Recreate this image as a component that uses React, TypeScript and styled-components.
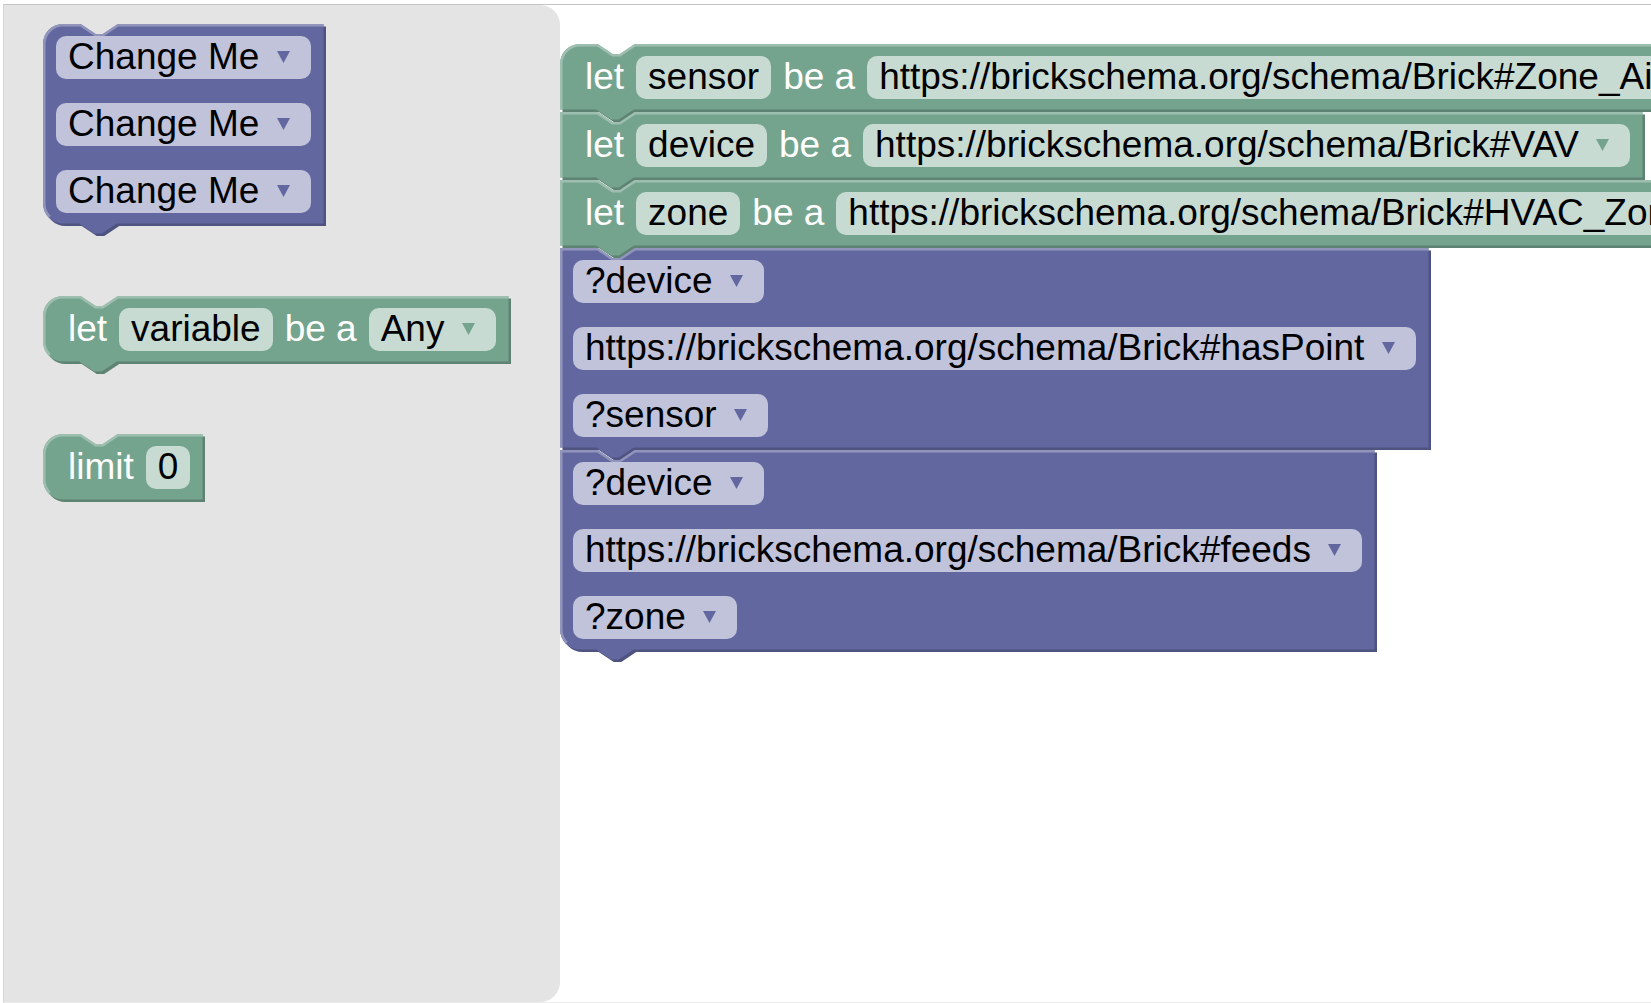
import { useLayoutEffect, useRef, useState } from "react";
import type { ReactNode } from "react";
import styled, { createGlobalStyle } from "styled-components";

/* ---------- palette ---------- */

type Tone = "green" | "purple";

const tones = {
  green: { fill: "#75a48e", light: "#9ebfb0", dark: "#5e8372", field: "#c8dbd2" },
  purple: { fill: "#62689f", light: "#9195bc", dark: "#4e537f", field: "#c0c3d9" },
};

/* ---------- layout ---------- */

const GlobalStyle = createGlobalStyle`
  *, *::before, *::after { box-sizing: border-box; }
  html, body, #root { height: 100%; }
  body {
    margin: 0;
    background: #fff;
    overflow: hidden;
    font-family: "Liberation Sans", Arial, sans-serif;
    font-size: 37px;
  }
`;

const Page = styled.div`
  height: 100%;
  padding: 4px 0 0 3px;
`;

const Editor = styled.div`
  display: flex;
  height: 100%;
  border: 1px solid #ececec;
  border-top-color: #c4c4c4;
  border-left-color: #d6d6d6;
  border-right: 0;
  overflow: hidden;
`;

const Flyout = styled.aside`
  display: flex;
  flex: none;
  flex-direction: column;
  align-items: flex-start;
  gap: 70px;
  width: 556px;
  padding: 19px 39px;
  background: #e4e4e4;
  border-radius: 0 20px 20px 0;
`;

const Workspace = styled.main`
  display: flex;
  flex: 1;
  flex-direction: column;
  align-items: flex-start;
  min-width: 0;
  padding-top: 39px;
  overflow: hidden;
`;

/* ---------- block ---------- */

const BlockBox = styled.div<{ $tone: Tone }>`
  position: relative;
  display: flex;
  flex: none;
  flex-direction: column;
  align-items: flex-start;
  gap: 24px;
  padding: 12px 15px 13px 13px;
  color: ${(p) => tones[p.$tone].fill};
`;

const Outline = styled.svg`
  position: absolute;
  inset: 0;
  width: 100%;
  height: 100%;
  overflow: visible;
  pointer-events: none;
`;

const Row = styled.div<{ $indent?: boolean }>`
  position: relative;
  display: flex;
  gap: 12px;
  padding-left: ${(p) => (p.$indent ? "12px" : "0")};
`;

const Label = styled.span`
  height: 43px;
  line-height: 41px;
  white-space: pre;
  color: #fff;
`;

const TextField = styled.input<{ $tone: Tone }>`
  field-sizing: content;
  height: 43px;
  padding: 0 12px 2px;
  border: 0;
  border-radius: 10px;
  background: ${(p) => tones[p.$tone].field};
  color: #000;
  font: inherit;
  line-height: 41px;
`;

const Picker = styled.span`
  display: inline-grid;
  align-items: start;
`;

const PickerSelect = styled.select<{ $tone: Tone }>`
  grid-area: 1 / 1;
  appearance: none;
  height: 43px;
  margin: 0;
  padding: 0 51px 2px 12px;
  border: 0;
  border-radius: 10px;
  background: ${(p) => tones[p.$tone].field};
  color: #000;
  font: inherit;
  line-height: 41px;
`;

const PickerArrow = styled.svg`
  grid-area: 1 / 1;
  justify-self: end;
  width: 13px;
  height: 12px;
  margin: 15px 21px 0 0;
  fill: currentColor;
  pointer-events: none;
`;

/* The outline is drawn in block units; one unit is 2.5 screen pixels. */
const SCALE = 2.5;

type Shape = {
  tone: Tone;
  squareTop?: boolean;
  squareBottom?: boolean;
  last?: boolean;
};

function BlockOutline({ w, h, tone, squareTop, squareBottom, last }: Shape & { w: number; h: number }) {
  const right = w / SCALE - 1;
  const bottom = h / SCALE - 1;
  const body = [
    squareTop ? "M 0,0" : "M 0,8 A 8,8 0 0,1 8,0",
    "H 15 l 6,4 3,0 6,-4",
    `H ${right} V ${bottom}`,
    last ? "" : "H 29.5 l -6,4 -3,0 -6,-4",
    squareBottom ? "H 0" : "H 8 a 8,8 0 0,1 -8,-8",
    "Z",
  ].join(" ");
  const highlight = [
    squareBottom ? `M 0.5,${bottom}` : `M 2.7,${bottom - 2.7} A 7.5,7.5 0 0,1 0.5,${bottom - 8}`,
    squareTop ? "V 0.5" : "V 8 A 7.5,7.5 0 0,1 8,0.5",
    `H 15 l 6,4 3,0 6,-4 H ${right}`,
  ].join(" ");
  const c = tones[tone];
  return (
    <Outline aria-hidden="true">
      <g transform={`scale(${SCALE})`}>
        <path d={body} fill={c.dark} transform="translate(1,1)" />
        <path d={body} fill={c.fill} />
        <path d={highlight} fill="none" stroke={c.light} strokeWidth="1" />
      </g>
    </Outline>
  );
}

function Block({ children, ...shape }: Shape & { children: ReactNode }) {
  const ref = useRef<HTMLDivElement>(null);
  const [size, setSize] = useState({ w: 0, h: 0 });

  useLayoutEffect(() => {
    const el = ref.current;
    if (!el) return;
    const measure = () => setSize({ w: el.offsetWidth, h: el.offsetHeight });
    measure();
    const observer = new ResizeObserver(measure);
    observer.observe(el);
    return () => observer.disconnect();
  }, []);

  return (
    <BlockBox ref={ref} $tone={shape.tone}>
      {size.w > 0 && <BlockOutline {...shape} {...size} />}
      {children}
    </BlockBox>
  );
}

function Dropdown({ tone, label, value }: { tone: Tone; label: string; value: string }) {
  return (
    <Picker>
      <PickerSelect $tone={tone} aria-label={label} defaultValue={value}>
        <option value={value}>{value}</option>
      </PickerSelect>
      <PickerArrow viewBox="0 0 13 12" aria-hidden="true">
        <path d="M0 0H13L6.5 12Z" />
      </PickerArrow>
    </Picker>
  );
}

type Stacked = { squareTop?: boolean; squareBottom?: boolean };

function LetBlock({ name, type, ...stacked }: Stacked & { name: string; type: string }) {
  return (
    <Block tone="green" {...stacked}>
      <Row $indent>
        <Label>let</Label>
        <TextField $tone="green" aria-label="Variable name" defaultValue={name} />
        <Label>be a</Label>
        <Dropdown tone="green" label="Type" value={type} />
      </Row>
    </Block>
  );
}

function TripleBlock({ terms, ...stacked }: Stacked & { terms: [string, string, string] }) {
  const labels = ["Subject", "Predicate", "Object"];
  return (
    <Block tone="purple" {...stacked}>
      {terms.map((term, i) => (
        <Row key={labels[i]}>
          <Dropdown tone="purple" label={labels[i]} value={term} />
        </Row>
      ))}
    </Block>
  );
}

function LimitBlock() {
  return (
    <Block tone="green" last>
      <Row $indent>
        <Label>limit</Label>
        <TextField $tone="green" aria-label="Limit" defaultValue="0" />
      </Row>
    </Block>
  );
}

const BRICK = "https://brickschema.org/schema/Brick#";

export default function App() {
  return (
    <Page>
      <GlobalStyle />
      <Editor>
        <Flyout aria-label="Toolbox">
          <TripleBlock terms={["Change Me", "Change Me", "Change Me"]} />
          <LetBlock name="variable" type="Any" />
          <LimitBlock />
        </Flyout>
        <Workspace aria-label="Workspace">
          <LetBlock squareBottom name="sensor" type={`${BRICK}Zone_Air_Temperature_Sensor`} />
          <LetBlock squareTop squareBottom name="device" type={`${BRICK}VAV`} />
          <LetBlock squareTop squareBottom name="zone" type={`${BRICK}HVAC_Zone`} />
          <TripleBlock squareTop squareBottom terms={["?device", `${BRICK}hasPoint`, "?sensor"]} />
          <TripleBlock squareTop terms={["?device", `${BRICK}feeds`, "?zone"]} />
        </Workspace>
      </Editor>
    </Page>
  );
}
